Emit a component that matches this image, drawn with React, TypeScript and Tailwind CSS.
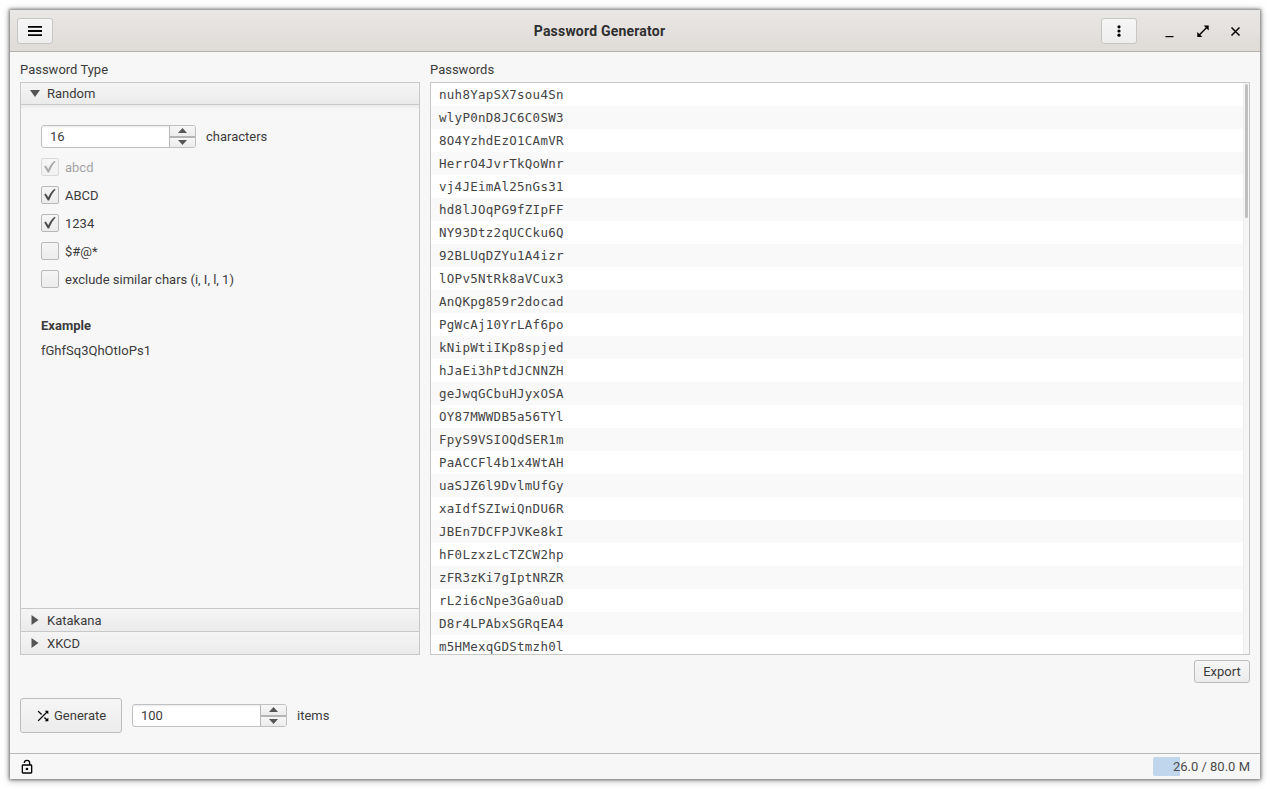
import { ReactNode } from "react";

const passwords = [
  "nuh8YapSX7sou4Sn", "wlyP0nD8JC6C0SW3", "8O4YzhdEzO1CAmVR", "HerrO4JvrTkQoWnr", "vj4JEimAl25nGs31",
  "hd8lJOqPG9fZIpFF", "NY93Dtz2qUCCku6Q", "92BLUqDZYu1A4izr", "lOPv5NtRk8aVCux3", "AnQKpg859r2docad",
  "PgWcAj10YrLAf6po", "kNipWtiIKp8spjed", "hJaEi3hPtdJCNNZH", "geJwqGCbuHJyxOSA", "OY87MWWDB5a56TYl",
  "FpyS9VSIOQdSER1m", "PaACCFl4b1x4WtAH", "uaSJZ6l9DvlmUfGy", "xaIdfSZIwiQnDU6R", "JBEn7DCFPJVKe8kI",
  "hF0LzxzLcTZCW2hp", "zFR3zKi7gIptNRZR", "rL2i6cNpe3Ga0uaD", "D8r4LPAbxSGRqEA4", "m5HMexqGDStmzh0l",
];

function Spinner({ value }: { value: string }) {
  return (
    <div className="flex h-[23px] w-[155px] overflow-hidden rounded-[3px] border border-[#c0c0c0] bg-white">
      <div className="flex flex-1 items-center pl-2 shadow-[inset_0_2px_2px_-1px_#e8e8e8]">{value}</div>
      <div className="flex w-[26px] flex-col border-l border-[#b8b8b8]">
        <button className="flex flex-1 items-center justify-center border-b border-[#b4b4b4] bg-linear-to-b from-[#f6f6f6] to-[#ececec]">
          <svg width="9" height="5" viewBox="0 0 9 5"><path d="M0 5L4.5 0L9 5Z" fill="#555" /></svg>
        </button>
        <button className="flex flex-1 items-center justify-center border-t border-[#b4b4b4] bg-linear-to-b from-[#f6f6f6] to-[#ececec]">
          <svg width="9" height="5" viewBox="0 0 9 5"><path d="M0 0L4.5 5L9 0Z" fill="#555" /></svg>
        </button>
      </div>
    </div>
  );
}

function Check({ label, checked = false, disabled = false }: { label: string; checked?: boolean; disabled?: boolean }) {
  return (
    <label className={disabled ? "flex h-7 items-center gap-1.5 opacity-45" : "flex h-7 items-center gap-1.5"}>
      <span className="flex size-[18px] items-center justify-center rounded-[2px] border border-[#b8b8b8] bg-linear-to-b from-[#f5f5f5] to-[#ececec]">
        {checked && (
          <svg width="12" height="14" viewBox="0 0 12 14">
            <path d="M0.2 6.6L1.8 5.6L4.3 9.2C6 5.5 8.1 2.7 10.8 0.8L11.6 1.5C8.7 4.8 6.8 8.2 5.1 12.5L3.8 12.6Z" fill="#4c4c4c" />
          </svg>
        )}
      </span>
      <span className="pt-px">{label}</span>
    </label>
  );
}

function Section({ title, open = false }: { title: string; open?: boolean }) {
  return (
    <div
      className={
        open
          ? "flex h-[21px] shrink-0 items-center bg-linear-to-b from-[#f5f5f5] to-[#ebebeb] pl-[9px]"
          : "flex h-[22px] shrink-0 items-center bg-linear-to-b from-[#f5f5f5] to-[#ebebeb] pl-[9px]"
      }
    >
      <span className="flex w-[17px] items-center">
        {open ? (
          <svg width="10" height="7" viewBox="0 0 10 7"><path d="M0 0H10L5 7Z" fill="#555" /></svg>
        ) : (
          <svg className="ml-px" width="8" height="10" viewBox="0 0 8 10"><path d="M0.5 0L7.5 5L0.5 10Z" fill="#555" /></svg>
        )}
      </span>
      <span className={open ? "pt-px" : "pt-0.5"}>{title}</span>
    </div>
  );
}

function HeaderButton({ children }: { children: ReactNode }) {
  return (
    <button className="flex h-[26px] w-9 items-center justify-center rounded-[3px] border border-[#c6c6c4] bg-linear-to-b from-[#f6f6f6] to-[#eeeeee]">
      {children}
    </button>
  );
}

export default function App() {
  return (
    <div className="h-[789px] w-[1270px] overflow-hidden bg-white px-2.5 pt-2.5 font-['Roboto',sans-serif] text-[13px] leading-5 text-[#3b3b3b]">
      <div className="flex h-[769px] flex-col bg-[#f7f7f7] shadow-[0_0_3px_1px_rgba(0,0,0,0.45),0_1px_7px_1px_rgba(0,0,0,0.25)]">
        <header className="flex h-[42px] shrink-0 items-center border-b border-[#b3afab] bg-linear-to-b from-[#e9e7e5] to-[#dfdbd7] pr-[17px] pl-[7px]">
          <HeaderButton>
            <svg width="14" height="10" viewBox="0 0 14 10"><path d="M0 0H14V1.7H0ZM0 4.1H14V5.9H0ZM0 8.3H14V10H0Z" fill="#000" /></svg>
          </HeaderButton>
          <h1 className="flex-1 pl-[45px] text-center text-sm font-bold tracking-[0.2px] text-[#2f2f2f]">Password Generator</h1>
          <div className="flex items-center">
            <HeaderButton>
              <svg width="4" height="12" viewBox="0 0 4 12"><circle cx="2" cy="1.8" r="1.6" /><circle cx="2" cy="6" r="1.6" /><circle cx="2" cy="10.2" r="1.6" /></svg>
            </HeaderButton>
            <svg className="ml-[25px]" width="16" height="16" viewBox="0 0 16 16"><path d="M3.5 13H11.5V14.2H3.5Z" /></svg>
            <svg className="ml-[17px]" width="16" height="16" viewBox="0 0 16 16"><path d="M8.5 2.5H13.5V7.5L11.6 5.6L4.6 12.6M7.5 14H2.5V9L4.4 10.9L11.4 3.9" fill="none" /><path d="M8.7 2.5H13.7V7.5ZM2.3 9V14H7.3Z" /><path d="M4 12.3L12 4.2" stroke="#000" strokeWidth="1.4" /></svg>
            <svg className="-mr-px ml-[17px]" width="16" height="16" viewBox="0 0 16 16"><path d="M3.5 4.5L11.5 12.5M11.5 4.5L3.5 12.5" stroke="#000" strokeWidth="1.5" /></svg>
          </div>
        </header>

        <main className="flex flex-1 flex-col px-2.5 pt-2">
          <div className="flex gap-2.5">
            <section className="w-[400px]">
              <h2 className="mb-[2px]">Password Type</h2>
              <div className="flex h-[573px] flex-col border border-[#c8c8c8]">
                <Section title="Random" open />
                <div className="flex flex-1 flex-col border-y border-[#c8c8c8] px-5 pt-5 shadow-[inset_0_3px_3px_-1px_#e9e9e9]">
                  <div className="mb-[5px] flex items-center gap-2.5"><Spinner value="16" />characters</div>
                  <Check label="abcd" checked disabled />
                  <Check label="ABCD" checked />
                  <Check label="1234" checked />
                  <Check label="$#@*" />
                  <Check label="exclude similar chars (i, I, l, 1)" />
                  <h3 className="mt-[23px] font-bold">Example</h3>
                  <p className="mt-[5px]">fGhfSq3QhOtIoPs1</p>
                </div>
                <Section title="Katakana" />
                <div className="border-t border-[#c8c8c8]"><Section title="XKCD" /></div>
              </div>
            </section>
            <section className="w-[820px]">
              <h2 className="mb-[2px]">Passwords</h2>
              <div className="flex h-[573px] overflow-hidden border border-[#c8c8c8] bg-white">
                <ul className="flex-1 font-['DejaVu_Sans_Mono',monospace] text-[12.5px] tracking-[0.275px] text-[#444]">
                  {passwords.map((p) => (
                    <li key={p} className="flex h-[23px] items-center pt-px pl-2 even:bg-[#f9f9f9]">{p}</li>
                  ))}
                </ul>
                <div className="flex w-1.5 justify-center border-l border-[#eeeeee] bg-[#f5f5f5] pt-px">
                  <div className="h-[134px] w-[3px] rounded-full bg-[#bfbfbf]" />
                </div>
              </div>
            </section>
          </div>
          <div className="mt-[5px] flex justify-end">
            <button className="h-[23px] w-14 rounded-[3px] border border-[#bcbcbc] bg-linear-to-b from-[#f6f6f6] to-[#ececec] leading-[21px]">Export</button>
          </div>
          <div className="mt-[15px] flex items-center">
            <button className="mr-2.5 flex h-[35px] w-[102px] items-center rounded-[3px] border border-[#bcbcbc] bg-linear-to-b from-[#f6f6f6] to-[#ececec] pl-[13.5px]">
              <svg className="mr-[3.5px]" width="16" height="16" viewBox="0 0 24 24"><path d="M10.59 9.17L5.41 4 4 5.41l5.17 5.17 1.42-1.41zM14.5 4l2.04 2.04L4 18.59 5.41 20 17.96 7.46 20 9.5V4h-5.5zm.33 9.41l-1.41 1.41 3.13 3.13L14.5 20H20v-5.5l-2.04 2.04-3.13-3.13z" fill="#000" /></svg>
              Generate
            </button>
            <Spinner value="100" />
            <span className="ml-2.5">items</span>
          </div>
        </main>

        <footer className="flex h-[26px] shrink-0 items-center justify-between border-t border-[#b8b8b8] pr-2.5 pl-[9px]">
          <svg width="16" height="16" viewBox="0 0 24 24" fill="#000"><path d="M18 20V10H6v10h12m0-12a2 2 0 0 1 2 2v10a2 2 0 0 1-2 2H6a2 2 0 0 1-2-2V10a2 2 0 0 1 2-2h9V6a3 3 0 0 0-6 0H7a5 5 0 0 1 10 0v2h1m-6 9a2 2 0 1 1 0-4 2 2 0 0 1 0 4z" /></svg>
          <div className="flex h-[19px] w-[97px] items-center justify-end rounded-[2px] bg-[linear-gradient(90deg,#c0d6ec_27px,transparent_27px)] text-[#4b4b4b]">26.0 / 80.0 M</div>
        </footer>
      </div>
    </div>
  );
}
